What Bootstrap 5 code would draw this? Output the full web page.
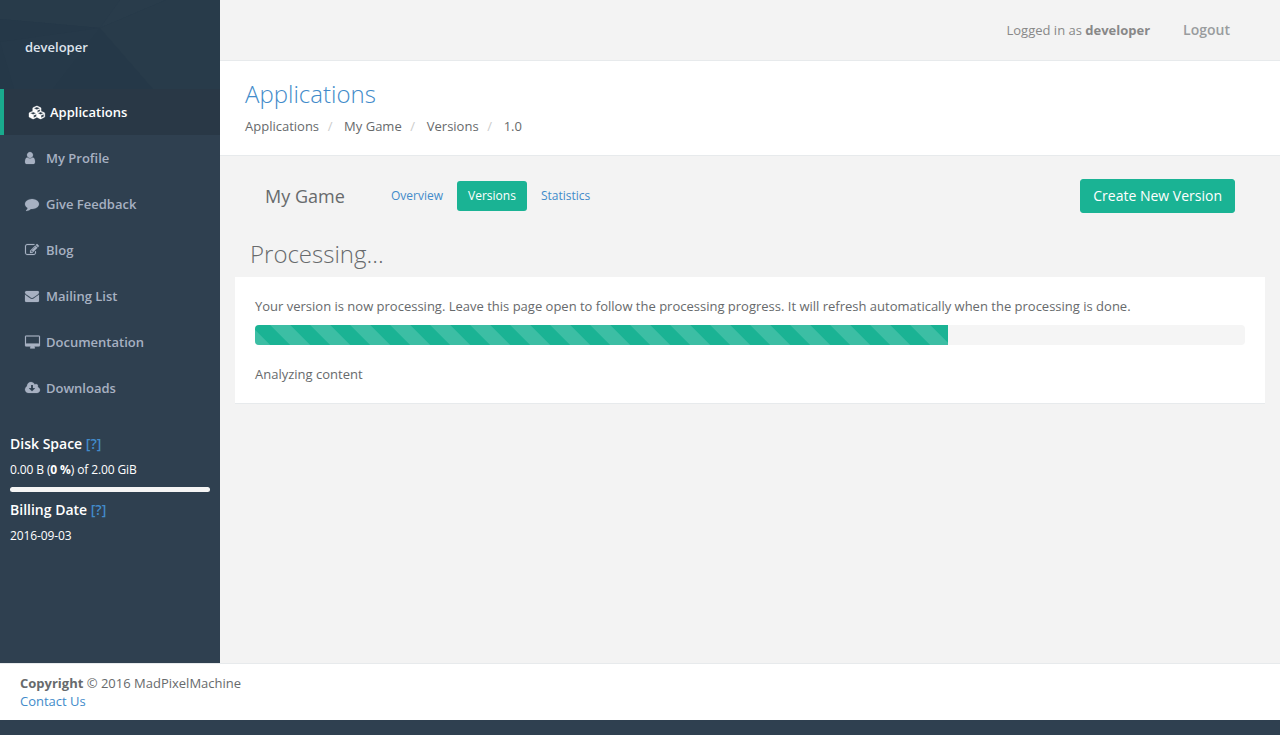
<!DOCTYPE html>
<html lang="en">
<head>
<meta charset="utf-8">
<meta name="viewport" content="width=device-width, initial-scale=1">
<title>My Game - Versions</title>
<link href="https://cdn.jsdelivr.net/npm/bootstrap@5.3.0/dist/css/bootstrap.min.css" rel="stylesheet">
<style>
body{font-family:"Open Sans",sans-serif;font-size:13px;line-height:18.57px;color:#676a6c;background:#2f4050;overflow:hidden}
a{color:#428bca;text-decoration:none}
.page-shell{height:663px}
.side-menu{width:220px;background:#2f4050;color:#fff}
.profile-head{height:89px;padding:38px 25px 0;background:#273a4a;position:relative}
.profile-head svg{position:absolute;left:0;top:0}
.profile-head strong{position:relative;color:#dfe4ed;font-weight:600;display:block}
.side-menu .nav-link{height:46px;padding:0 20px 0 25px;color:#a7b1c2;font-weight:600;display:flex;align-items:center;border-radius:0}
.side-menu .nav-link.active{background:#293846;color:#fff;border-left:4px solid #19aa8d}
.menu-icon{width:18px;margin-right:3px;display:flex;flex:none}
.menu-icon svg{height:14px;fill:currentColor;stroke:currentColor;stroke-width:22;display:block;overflow:visible}
.menu-icon .cubes-icon{height:13px;stroke-width:50}
.side-info{padding:25px 10px 0}
.side-info h5{font-size:14px;font-weight:600;line-height:16px;margin:0 0 9px}
.side-info p{font-size:12px;line-height:17px;margin:0;letter-spacing:-.12px}
.disk-bar{height:5px;background:#f5f5f5;border-radius:4px;margin:9px 0 10px}
.main-area{background:#f3f3f3;min-width:0}
.top-strip{height:61px;border-bottom:1px solid #e7eaec;padding-right:50px;color:#888}
.top-strip a{color:#999c9e;font-weight:600;font-size:14px;margin-left:33px}
.page-heading{height:95px;background:#fff;border-bottom:1px solid #e7eaec;padding:20px 25px 0}
.page-heading h2{font-size:24px;font-weight:300;line-height:26px;margin:0 0 10px}
.breadcrumb{--bs-breadcrumb-divider-color:#ccc;font-size:13px;margin:0}
.breadcrumb-item+.breadcrumb-item{padding-left:8.6px}
.breadcrumb-item+.breadcrumb-item::before{padding-right:11.7px}
.breadcrumb a,.breadcrumb .active{color:#676a6c}
.app-bar{height:34px;margin:23px 45px 0}
.app-bar h3{font-size:18px;font-weight:400;line-height:20px;margin:0 35px 0 0;width:80px;white-space:nowrap}
.app-bar .nav{gap:3px;margin-bottom:1px}
.app-bar .nav-link{font-size:12px;line-height:18px;padding:6px 11px;height:30px;border-radius:3px;color:#428bca}
.app-bar .nav-link.active{background:#1ab394;color:#fff;font-weight:500}
.btn-create{background:#1ab394;color:#fff;font-size:14px;line-height:20px;padding:6px 12px;border:1px solid #1ab394;border-radius:3px}
.status-title{font-size:24px;font-weight:300;line-height:26px;margin:28px 0 10px 30px}
.status-panel{background:#fff;border-bottom:1px solid #e7eaec;margin:0 15px;padding:20px;height:127px}
.status-panel .progress{height:20px;border-radius:4px;background:#f5f5f5;margin:9px 0 20px}
.status-panel .progress-bar{background-color:#1ab394;background-size:40px 40px;background-position:15.7px 0;background-image:linear-gradient(45deg,rgba(255,255,255,.15) 25%,transparent 25%,transparent 50%,rgba(255,255,255,.15) 50%,rgba(255,255,255,.15) 75%,transparent 75%,transparent)}
.page-footer{height:57px;background:#fff;border-top:1px solid #e7eaec;padding:10px 20px;line-height:18px}
</style>
</head>
<body>
<div class="page-shell d-flex">
  <nav class="side-menu flex-shrink-0">
    <div class="profile-head">
      <svg width="220" height="89" aria-hidden="true">
        <path d="M0 19L100 28L120 0H0Z" fill="#283b4a"/>
        <path d="M0 19L100 28L153 89H0Z" fill="#253848"/>
        <path d="M0 42L14 89H53L100 28Z" fill="#263949"/>
        <path d="M100 28L120 0H166Z" fill="#293c4b"/>
        <path d="M100 28L166 0H220V89H153Z" fill="#283b4a"/>
      </svg>
      <strong>developer</strong>
    </div>
    <div class="nav flex-column">
      <a class="nav-link active" href="#"><span class="menu-icon"><svg class="cubes-icon" viewBox="0 0 2304 1792"><path transform="translate(0 1536) scale(1 -1)" d="M640 -96l384 192v314l-384 -164v-342zM576 358l404 173l-404 173l-404 -173zM1664 -96l384 192v314l-384 -164v-342zM1600 358l404 173l-404 173l-404 -173zM1152 651l384 165v266l-384 -164v-267zM1088 1030l441 189l-441 189l-441 -189zM2176 512v-416q0 -36 -19 -67t-52 -47l-448 -224q-25 -14 -57 -14t-57 14l-448 224q-5 2 -7 4q-2 -2 -7 -4l-448 -224q-25 -14 -57 -14t-57 14l-448 224q-33 16 -52 47t-19 67v416q0 38 21.5 70t56.5 48l434 186v400q0 38 21.5 70t56.5 48l448 192q23 10 50 10t50 -10l448 -192q35 -16 56.5 -48t21.5 -70v-400l434 -186q36 -16 57 -48t21 -70z"/></svg></span>Applications</a>
      <a class="nav-link" href="#"><span class="menu-icon"><svg viewBox="256 0 1280 1792"><path d="M1536 1399q0 109-62.5 187t-150.5 78h-854q-88 0-150.5-78t-62.5-187q0-85 8.5-160.5t31.5-152 58.5-131 94-89 134.5-34.5q131 128 313 128t313-128q76 0 134.5 34.5t94 89 58.5 131 31.5 152 8.5 160.5zm-256-887q0 159-112.5 271.5t-271.5 112.5-271.5-112.5-112.5-271.5 112.5-271.5 271.5-112.5 271.5 112.5 112.5 271.5z"/></svg></span>My Profile</a>
      <a class="nav-link" href="#"><span class="menu-icon"><svg viewBox="0 0 1792 1792"><path d="M1792 896q0 174-120 321.5t-326 233-450 85.5q-70 0-145-8-198 175-460 242-49 14-114 22-17 2-30.5-9t-17.5-29v-1q-3-4-.5-12t2-10 4.5-9.5l6-9 7-8.5 8-9q7-8 31-34.5t34.5-38 31-39.5 32.5-51 27-59 26-76q-157-89-247.5-220t-90.5-281q0-130 71-248.5t191-204.5 286-136.5 348-50.5q244 0 450 85.5t326 233 120 321.5z"/></svg></span>Give Feedback</a>
      <a class="nav-link" href="#"><span class="menu-icon"><svg viewBox="0 0 1792 1792"><path d="M888 1184l116-116-152-152-116 116v56h96v96h56zm440-720q-16-16-33 1l-350 350q-17 17-1 33t33-1l350-350q17-17 1-33zm80 594v190q0 119-84.5 203.5t-203.5 84.5h-832q-119 0-203.5-84.5t-84.5-203.5v-832q0-119 84.5-203.5t203.5-84.5h832q63 0 117 25 15 7 18 23 3 17-9 29l-49 49q-14 14-32 8-23-6-45-6h-832q-66 0-113 47t-47 113v832q0 66 47 113t113 47h832q66 0 113-47t47-113v-126q0-13 9-22l64-64q15-15 35-7t20 29zm-96-738l288 288-672 672h-288v-288zm444 132l-92 92-288-288 92-92q28-28 68-28t68 28l152 152q28 28 28 68t-28 68z"/></svg></span>Blog</a>
      <a class="nav-link" href="#"><span class="menu-icon"><svg viewBox="0 0 1792 1792"><path d="M1792 710v794q0 66-47 113t-113 47h-1472q-66 0-113-47t-47-113v-794q44 49 101 87 362 246 497 345 57 42 92.500 65.500t94.500 48 110 24.500h2q51 0 110-24.500t94.500-48 92.500-65.500q170-123 498-345 57-39 100-87zm0-294q0 79-49 151t-122 123q-376 261-468 325-10 7-42.500 31t-54 38.500-52 32.500-57.500 27-50 9h-2q-23 0-50-9t-57.500-27-52-32.500-54-38.500-42.500-31q-91-64-262-182.500t-205-142.500q-62-42-117-115.500t-55-136.500q0-78 41.500-130t118.500-52h1472q65 0 112.500 47t47.500 113z"/></svg></span>Mailing List</a>
      <a class="nav-link" href="#"><span class="menu-icon"><svg viewBox="-64 -64 1920 1792"><path d="M1728 992v-832q0-13-9.500-22.500t-22.500-9.500h-1600q-13 0-22.500 9.500t-9.500 22.500v832q0 13 9.500 22.500t22.500 9.500h1600q13 0 22.500-9.500t9.500-22.500zm128-832v1088q0 66-47 113t-113 47h-544q0 37 16 77.500t32 71 16 43.500q0 26-19 45t-45 19h-512q-26 0-45-19t-19-45q0-14 16-44t32-70 16-78h-544q-66 0-113-47t-47-113v-1088q0-66 47-113t113-47h1600q66 0 113 47t47 113z"/></svg></span>Documentation</a>
      <a class="nav-link" href="#"><span class="menu-icon"><svg viewBox="0 0 1920 1792"><path transform="translate(0 1536) scale(1 -1)" d="M1280 608q0 14-9 23t-23 9h-224v352q0 13-9.500 22.500t-22.500 9.500h-192q-13 0-22.500-9.500t-9.500-22.500v-352h-224q-13 0-22.500-9.500t-9.500-22.500q0-14 9-23l352-352q9-9 23-9t23 9l351 351q10 12 10 24zM1920 384q0-159-112.500-271.500t-271.500-112.500h-1088q-185 0-316.500 131.500t-131.500 316.500q0 130 70 240t188 165q-2 30-2 43q0 212 150 362t362 150q156 0 285.500-87t188.500-231q71 62 166 62q106 0 181-75t75-181q0-76-41-138q130-31 213.500-135.500t83.500-238.500z"/></svg></span>Downloads</a>
    </div>
    <div class="side-info">
      <h5>Disk Space <a href="#">[?]</a></h5>
      <p>0.00 B (<b>0 %</b>) of 2.00 GiB</p>
      <div class="disk-bar"></div>
      <h5>Billing Date <a href="#">[?]</a></h5>
      <p>2016-09-03</p>
    </div>
  </nav>
  <main class="main-area flex-grow-1">
    <div class="top-strip d-flex align-items-center justify-content-end">
      <span>Logged in as <b>developer</b></span>
      <a href="#">Logout</a>
    </div>
    <header class="page-heading">
      <h2><a href="#">Applications</a></h2>
      <ol class="breadcrumb">
        <li class="breadcrumb-item"><a href="#">Applications</a></li>
        <li class="breadcrumb-item"><a href="#">My Game</a></li>
        <li class="breadcrumb-item"><a href="#">Versions</a></li>
        <li class="breadcrumb-item active">1.0</li>
      </ol>
    </header>
    <div class="app-bar d-flex align-items-center">
      <h3>My Game</h3>
      <div class="nav nav-pills">
        <a class="nav-link" href="#">Overview</a>
        <a class="nav-link active" href="#">Versions</a>
        <a class="nav-link" href="#">Statistics</a>
      </div>
      <a class="btn btn-create ms-auto" href="#">Create New Version</a>
    </div>
    <h2 class="status-title">Processing...</h2>
    <section class="status-panel">
      <p class="m-0">Your version is now processing. Leave this page open to follow the processing progress. It will refresh automatically when the processing is done.</p>
      <div class="progress"><div class="progress-bar" style="width:70%"></div></div>
      <p class="m-0">Analyzing content</p>
    </section>
  </main>
</div>
<footer class="page-footer">
  <div><b>Copyright</b> © 2016 MadPixelMachine</div>
  <a href="#">Contact Us</a>
</footer>
<script src="https://cdn.jsdelivr.net/npm/bootstrap@5.3.0/dist/js/bootstrap.bundle.min.js"></script>
</body>
</html>
